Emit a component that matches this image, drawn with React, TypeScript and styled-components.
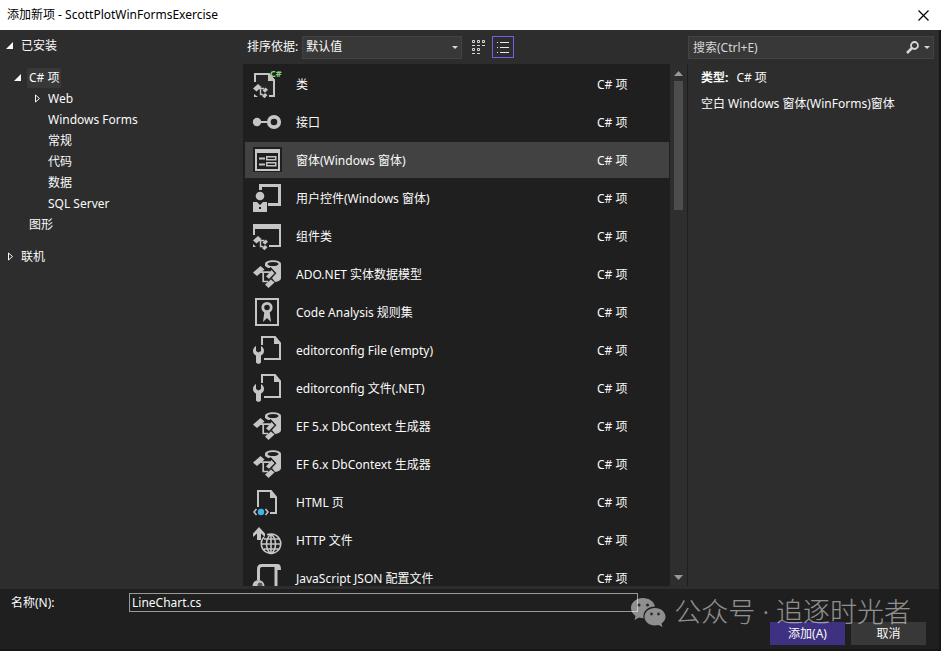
import React, { useState } from "react";
import styled, { createGlobalStyle } from "styled-components";

const GlobalStyle = createGlobalStyle`
  * { box-sizing: border-box; }
  body { margin: 0; background: #1f1f1f; }
  body, button, input, select {
    font-family: "Noto Sans", "Noto Sans CJK SC", sans-serif;
    font-size: 12px;
    line-height: 20px;
    color: #fafafa;
  }
  ul { list-style: none; margin: 0; padding: 0; }
  button { margin: 0; padding: 0; border: 0; background: none; cursor: pointer; }
  svg { display: block; flex: none; }
`;

const Dialog = styled.div`
  position: relative;
  display: grid;
  grid-template-rows: 30px minmax(0, 1fr) auto;
  height: 100vh;
  background: #2d2d2d;
`;

const TitleBar = styled.header`
  display: flex;
  align-items: center;
  justify-content: space-between;
  padding: 0 12px 0 7px;
  background: #ffffff;
`;

const Title = styled.h1`
  margin: 0;
  font-size: 12px;
  font-weight: 400;
  color: #000000;
`;

const Body = styled.div`
  display: grid;
  grid-template-columns: 243px minmax(0, 1fr) 251px;
  min-height: 0;
  border-right: 2px solid #161616;
`;

const Tree = styled.nav`
  padding: 5px 0 0 6px;
`;

const Section = styled.li`
  margin-bottom: 11px;
`;

const Branch = styled.ul<{ $first?: boolean }>`
  padding-top: ${(p) => (p.$first ? "11px" : "0")};
  padding-left: ${(p) => (p.$first ? "8px" : "19px")};
`;

const Node = styled.button<{ $selected?: boolean }>`
  display: flex;
  align-items: center;
  height: 21px;
  text-align: left;
  white-space: nowrap;

  span {
    padding: 0 2px;
    background: ${(p) => (p.$selected ? "#383838" : "transparent")};
  }
`;

const Twisty = styled.svg`
  width: 9px;
  height: 9px;
  margin-right: 4px;
`;

const Center = styled.main`
  display: flex;
  flex-direction: column;
  min-width: 0;
  min-height: 0;
  padding-bottom: 3px;
`;

const Toolbar = styled.div`
  display: flex;
  align-items: center;
  height: 34px;
  padding-left: 4px;
`;

const SelectBox = styled.div`
  position: relative;
  width: 160px;
  margin: 0 6px 0 4px;

  svg {
    position: absolute;
    right: 4px;
    top: 10px;
    pointer-events: none;
  }
`;

const Select = styled.select`
  display: block;
  width: 100%;
  height: 23px;
  padding: 0 3px;
  appearance: none;
  border: 1px solid #434343;
  border-radius: 0;
  background: #383838;
`;

const ViewButton = styled.button<{ $active?: boolean }>`
  display: flex;
  align-items: center;
  justify-content: center;
  width: 22px;
  height: 22px;
  margin-right: 2px;
  border: 1px solid ${(p) => (p.$active ? "#7160e8" : "transparent")};
`;

const ListFrame = styled.div`
  display: grid;
  grid-template-columns: minmax(0, 1fr) 17px;
  flex: 1;
  min-height: 0;
  padding-right: 1px;
  background: #1f1f1f;
`;

const List = styled.ul`
  display: flex;
  flex-direction: column;
  gap: 2px;
  overflow: hidden;
  padding: 2px 1px 0 2px;
`;

const Row = styled.button<{ $selected?: boolean }>`
  display: grid;
  grid-template-columns: 32px minmax(0, 1fr) 72px;
  column-gap: 13px;
  align-items: center;
  width: 100%;
  height: 36px;
  padding-left: 6px;
  text-align: left;
  white-space: nowrap;
  background: ${(p) => (p.$selected ? "#424242" : "transparent")};

  span { padding-top: 2px; }
`;

const ScrollTrack = styled.div`
  display: flex;
  flex-direction: column;
  align-items: center;
  padding: 7px 0 6px;
  background: #2e2e2e;
`;

const ScrollThumb = styled.div`
  width: 9px;
  height: 129px;
  margin: 5px 0 auto;
  background: #4d4d4d;
`;

const Details = styled.aside`
  padding: 6px 5px 0 0;
`;

const Search = styled.div`
  display: flex;
  align-items: center;
  height: 23px;
  padding-right: 3px;
  border: 1px solid #434343;
  background: #383838;
`;

const SearchInput = styled.input`
  flex: 1;
  min-width: 0;
  height: 21px;
  padding: 0 4px;
  border: 0;
  background: none;

  &::placeholder { color: #d6d6d6; opacity: 1; }
`;

const SearchButton = styled.button`
  display: flex;
  align-items: center;
  gap: 5px;
`;

const Info = styled.p`
  margin: 0 0 6px;
  padding-left: 13px;

  &:first-of-type { margin-top: 9px; }
  b { margin-right: 8px; }
`;

const Footer = styled.footer`
  display: grid;
  grid-template-columns: 118px minmax(0, 1fr);
  padding: 4px 13px 4px 11px;
  background: #1f1f1f;
  border-right: 2px solid #161616;
  border-bottom: 2px solid #161616;
`;

const NameInput = styled.input`
  width: 509px;
  max-width: 100%;
  height: 19px;
  padding: 0 2px;
  border: 1px solid #999999;
  background: #1f1f1f;
`;

const Actions = styled.div`
  display: flex;
  grid-column: 1 / -1;
  justify-content: flex-end;
  gap: 6px;
  padding-top: 9px;
`;

const ActionButton = styled.button<{ $primary?: boolean }>`
  width: 75px;
  height: 23px;
  background: ${(p) => (p.$primary ? "#3f3182" : "#383838")};
`;

const Watermark = styled.div`
  position: absolute;
  right: 30px;
  bottom: 19px;
  display: flex;
  align-items: center;
  gap: 8px;
  font-family: "Noto Sans", "Noto Sans CJK SC", sans-serif;
  font-size: 27px;
  font-weight: 300;
  line-height: 40px;
  color: #ffffff;
  opacity: 0.5;
  pointer-events: none;
  white-space: nowrap;
`;

const C = "#c5c5c5";

const Icon = ({ children }: { children: React.ReactNode }) => (
  <svg width="32" height="32" viewBox="0 0 32 32" fill="none" stroke={C} strokeWidth="2" aria-hidden="true">
    {children}
  </svg>
);

const MiniGraph = () => (
  <g stroke="none" fill={C}>
    <path d="M2 20.500l5-4.500 3.500 3-5 4.500z" />
    <path d="M11.500 22.500l3-3 2.500 2.200-3 3zM11 28l3-3 2.500 2.200-3 3z" />
    <path d="M8 19.800h5v1.500H8zM8.800 21h1.400v4.800h2v1.400H8.800z" />
  </g>
);

const ClassIcon = () => (
  <Icon>
    <path d="M4 14V6h14l5 6v16h-5" fill="#252525" />
    <path d="M17 5l7 7v1h-7z" fill={C} stroke="none" />
    <path d="M3 26v3h4z" fill={C} stroke="none" />
    <MiniGraph />
    <text x="19" y="9" fontSize="9" fontWeight="700" fill="#84d67f" stroke="none">C#</text>
  </Icon>
);

const InterfaceIcon = () => (
  <Icon>
    <circle cx="6" cy="16" r="4.200" fill={C} stroke="none" />
    <path d="M8 16h10" />
    <circle cx="23" cy="16" r="5.200" strokeWidth="3.800" />
  </Icon>
);

const FormIcon = () => (
  <Icon>
    <path d="M2 3h29v25H2z" fill="#1f1f1f" stroke="none" />
    <path d="M5 8v18h23V8" />
    <path d="M4 5h25v4H4z" fill={C} stroke="none" />
    <path d="M8 14.500h6M8 20.500h6" />
    <path d="M15.750 12.750h9v3h-9zM15.750 18.750h9v3h-9z" strokeWidth="1.500" />
  </Icon>
);

const UserControlIcon = () => (
  <Icon>
    <path d="M9.500 8V3.500h19v19H17" strokeWidth="3" />
    <circle cx="9" cy="14" r="4.300" fill={C} stroke="none" />
    <path d="M2 20h4l3 3 3-3h4v10H2zM8 25v2h2v-2z" fill={C} fillRule="evenodd" stroke="none" />
  </Icon>
);

const ComponentIcon = () => (
  <Icon>
    <path d="M3 15V8M29 8v18H18" />
    <path d="M2 4h28v5H2z" fill={C} stroke="none" />
    <path d="M2 24v3h3z" fill={C} stroke="none" />
    <MiniGraph />
  </Icon>
);

const EntityIcon = () => (
  <Icon>
    <path d="M14 6c0-5 16-5 16 0v14c0 2-2 3.500-6 4l-3-4 4-5-5-5h-3l-3-2z" fill={C} stroke="none" />
    <ellipse cx="22" cy="6" rx="5.500" ry="2" fill="#1f1f1f" stroke="none" />
    <path d="M2 14.500L9.500 8l4 3.500L6 18z" fill={C} stroke="none" />
    <path d="M9 14.200h10M12.200 14v9.500h5" strokeWidth="1.700" />
    <path d="M15 18.500l6-7 4.500 4-6.500 6z" fill={C} stroke="none" />
    <path d="M19 9.500l5.500 5.700-6 6" stroke="#1f1f1f" strokeWidth="1.300" />
    <path d="M14 26.500l6-5 3.500 3-6 5.500z" fill={C} stroke="none" />
  </Icon>
);

const RulesetIcon = () => (
  <Icon>
    <path d="M5 3h22v26H5z" />
    <circle cx="16" cy="11.500" r="4.200" strokeWidth="2.800" />
    <path d="M13.500 15h5l1.500 11-4-4-4 4z" fill={C} stroke="none" />
  </Icon>
);

const ConfigIcon = () => (
  <Icon>
    <path d="M11 11V3h13l5 6v16H13" />
    <path d="M23 2v8h7z" fill={C} stroke="none" />
    <path
      d="M5 12v5l2.500 1.500L10 17v-5c2 1 3 3 3 5 0 2-1.200 3.600-3 4.500V28c0 2.400-5 2.400-5 0v-6.500C3.200 20.600 2 19 2 17c0-2 1-4 3-5z"
      fill={C}
      stroke="none"
    />
  </Icon>
);

const HtmlIcon = () => (
  <Icon>
    <path d="M7 21V5h13l5 6v16h-6" />
    <path d="M19 4v8h7z" fill={C} stroke="none" />
    <path d="M5.500 23L3 26l2.500 3M14.500 23l2.500 3-2.500 3" strokeWidth="1.500" />
    <circle cx="10" cy="26" r="3.200" fill="#3bb4f2" stroke="none" />
  </Icon>
);

const HttpIcon = () => (
  <Icon>
    <path d="M8 3l6 6.500v3.500l-4-3.500V16H6V9.500L2 13V9.500z" fill={C} stroke="none" />
    <path
      d="M13 13a9.700 9.700 0 1 0 7-3c-1.500 0-3 .3-4 .8M20 10v20M11 20h19M13 15h15M13 25h15M20 10c-6 5-6 15 0 20M20 10c6 5 6 15 0 20"
      strokeWidth="1.600"
    />
  </Icon>
);

const ScriptIcon = () => (
  <Icon>
    <path d="M7.500 18V7c0-2.500 1.500-3.500 3.500-3.500h15" strokeWidth="3" />
    <path d="M11 2h16c2 0 3 2 3 6h-5c0-2 0-3-2-3H11z" fill={C} stroke="none" />
    <path d="M25 5v25" strokeWidth="3" />
    <circle cx="7.500" cy="24" r="6" fill={C} stroke="none" />
    <circle cx="9" cy="23" r="2.500" fill="#555555" stroke="none" />
  </Icon>
);

const Arrow = ({ up }: { up?: boolean }) => (
  <svg width="9" height="5" viewBox="0 0 9 5" fill="#999999" aria-hidden="true">
    <path d={up ? "M0 5l4.500-5L9 5z" : "M0 0h9L4.500 5z"} />
  </svg>
);

const Caret = () => (
  <svg width="6" height="3" viewBox="0 0 6 3" fill="#d6d6d6" aria-hidden="true">
    <path d="M0 0h6L3 3z" />
  </svg>
);

const Expander = ({ open }: { open?: boolean }) => (
  <Twisty viewBox="0 0 9 9" aria-hidden="true">
    {open ? <path d="M7 1v7H0z" fill="#fafafa" /> : <path d="M2.500 1v7l4-3.500z" fill="none" stroke="#fafafa" />}
  </Twisty>
);

const templates = [
  { name: "类", icon: <ClassIcon /> },
  { name: "接口", icon: <InterfaceIcon /> },
  { name: "窗体(Windows 窗体)", icon: <FormIcon /> },
  { name: "用户控件(Windows 窗体)", icon: <UserControlIcon /> },
  { name: "组件类", icon: <ComponentIcon /> },
  { name: "ADO.NET 实体数据模型", icon: <EntityIcon /> },
  { name: "Code Analysis 规则集", icon: <RulesetIcon /> },
  { name: "editorconfig File (empty)", icon: <ConfigIcon /> },
  { name: "editorconfig 文件(.NET)", icon: <ConfigIcon /> },
  { name: "EF 5.x DbContext 生成器", icon: <EntityIcon /> },
  { name: "EF 6.x DbContext 生成器", icon: <EntityIcon /> },
  { name: "HTML 页", icon: <HtmlIcon /> },
  { name: "HTTP 文件", icon: <HttpIcon /> },
  { name: "JavaScript JSON 配置文件", icon: <ScriptIcon /> },
];

const leaves = ["Windows Forms", "常规", "代码", "数据", "SQL Server"];

export default function App() {
  const [selected, setSelected] = useState(2);
  const [fileName, setFileName] = useState("LineChart.cs");

  return (
    <>
      <GlobalStyle />
      <Dialog role="dialog" aria-labelledby="dialog-title">
        <TitleBar>
          <Title id="dialog-title">添加新项 - ScottPlotWinFormsExercise</Title>
          <button aria-label="关闭">
            <svg width="11" height="11" viewBox="0 0 11 11" stroke="#000000" strokeWidth="1.200">
              <path d="M.5.5l10 10M10.500.5l-10 10" />
            </svg>
          </button>
        </TitleBar>

        <Body>
          <Tree aria-label="模板类别">
            <ul>
              <Section>
                <Node><Expander open /><span>已安装</span></Node>
                <Branch $first>
                  <li>
                    <Node $selected><Expander open /><span>C# 项</span></Node>
                    <Branch>
                      <li><Node><Expander /><span>Web</span></Node></li>
                      {leaves.map((leaf) => (
                        <li key={leaf}><Node><Twisty /><span>{leaf}</span></Node></li>
                      ))}
                    </Branch>
                  </li>
                  <li><Node><Twisty /><span>图形</span></Node></li>
                </Branch>
              </Section>
              <Section><Node><Expander /><span>联机</span></Node></Section>
            </ul>
          </Tree>

          <Center>
            <Toolbar>
              <label htmlFor="sort">排序依据:</label>
              <SelectBox>
                <Select id="sort"><option>默认值</option></Select>
                <Caret />
              </SelectBox>
              <ViewButton aria-label="小图标">
                <svg width="14" height="14" viewBox="0 0 14 14" fill="none" stroke="#d6d6d6">
                  <path d="M.5.5h2v2h-2zM5.500.5h2v2h-2zM10.500.5h2v2h-2zM.5 8.500h2v2h-2zM5.500 8.500h2v2h-2zM0 5.500h3M5 5.500h3M10 5.500h3M0 13.500h3M5 13.500h3" />
                </svg>
              </ViewButton>
              <ViewButton $active aria-label="列表" aria-pressed="true">
                <svg width="12" height="11" viewBox="0 0 12 11" stroke="#e8e8e8">
                  <path d="M0 .5h1M3 .5h9M0 5.500h1M3 5.500h9M0 10.500h1M3 10.500h9" />
                </svg>
              </ViewButton>
            </Toolbar>
            <ListFrame>
              <List>
                {templates.map((t, i) => (
                  <li key={t.name}>
                    <Row $selected={i === selected} onClick={() => setSelected(i)}>
                      {t.icon}
                      <span>{t.name}</span>
                      <span>C# 项</span>
                    </Row>
                  </li>
                ))}
              </List>
              <ScrollTrack>
                <Arrow up />
                <ScrollThumb />
                <Arrow />
              </ScrollTrack>
            </ListFrame>
          </Center>

          <Details>
            <Search>
              <SearchInput aria-label="搜索" placeholder="搜索(Ctrl+E)" />
              <SearchButton aria-label="搜索选项">
                <svg width="13" height="13" viewBox="0 0 13 13" fill="none" stroke="#d6d6d6">
                  <circle cx="8.500" cy="4.500" r="3.500" strokeWidth="1.800" />
                  <path d="M6 7l-5 5" strokeWidth="2.500" />
                </svg>
                <Caret />
              </SearchButton>
            </Search>
            <Info><b>类型:</b>C# 项</Info>
            <Info>空白 Windows 窗体(WinForms)窗体</Info>
          </Details>
        </Body>

        <Footer>
          <label htmlFor="file-name">名称(N):</label>
          <NameInput id="file-name" value={fileName} onChange={(e) => setFileName(e.target.value)} />
          <Actions>
            <ActionButton $primary>添加(A)</ActionButton>
            <ActionButton>取消</ActionButton>
          </Actions>
        </Footer>

        <Watermark>
          <svg width="36" height="30" viewBox="0 0 36 30" aria-hidden="true">
            <path
              d="M13 1C6 1 1 5.500 1 11c0 3.300 1.700 6 4.500 8L4.500 23l4.500-2.500c1.500.5 3 .7 4.500.7C12.500 14 18 9.500 25 9.500 24 4.500 19 1 13 1z"
              fill="#ffffff"
            />
            <path
              d="M25 11c-6 0-10.500 4-10.500 8.800S19 28.500 25 28.500c1.300 0 2.500-.2 3.600-.5l3.900 2-1-3.500c2.500-1.700 4-4 4-6.700C35.500 15 31 11 25 11z"
              fill="#ffffff"
            />
            <g fill="#3a3a3a">
              <circle cx="9" cy="8" r="1.600" />
              <circle cx="17.500" cy="8" r="1.600" />
              <circle cx="21.500" cy="17" r="1.400" />
              <circle cx="28.500" cy="17" r="1.400" />
            </g>
          </svg>
          <span>公众号 · 追逐时光者</span>
        </Watermark>
      </Dialog>
    </>
  );
}
